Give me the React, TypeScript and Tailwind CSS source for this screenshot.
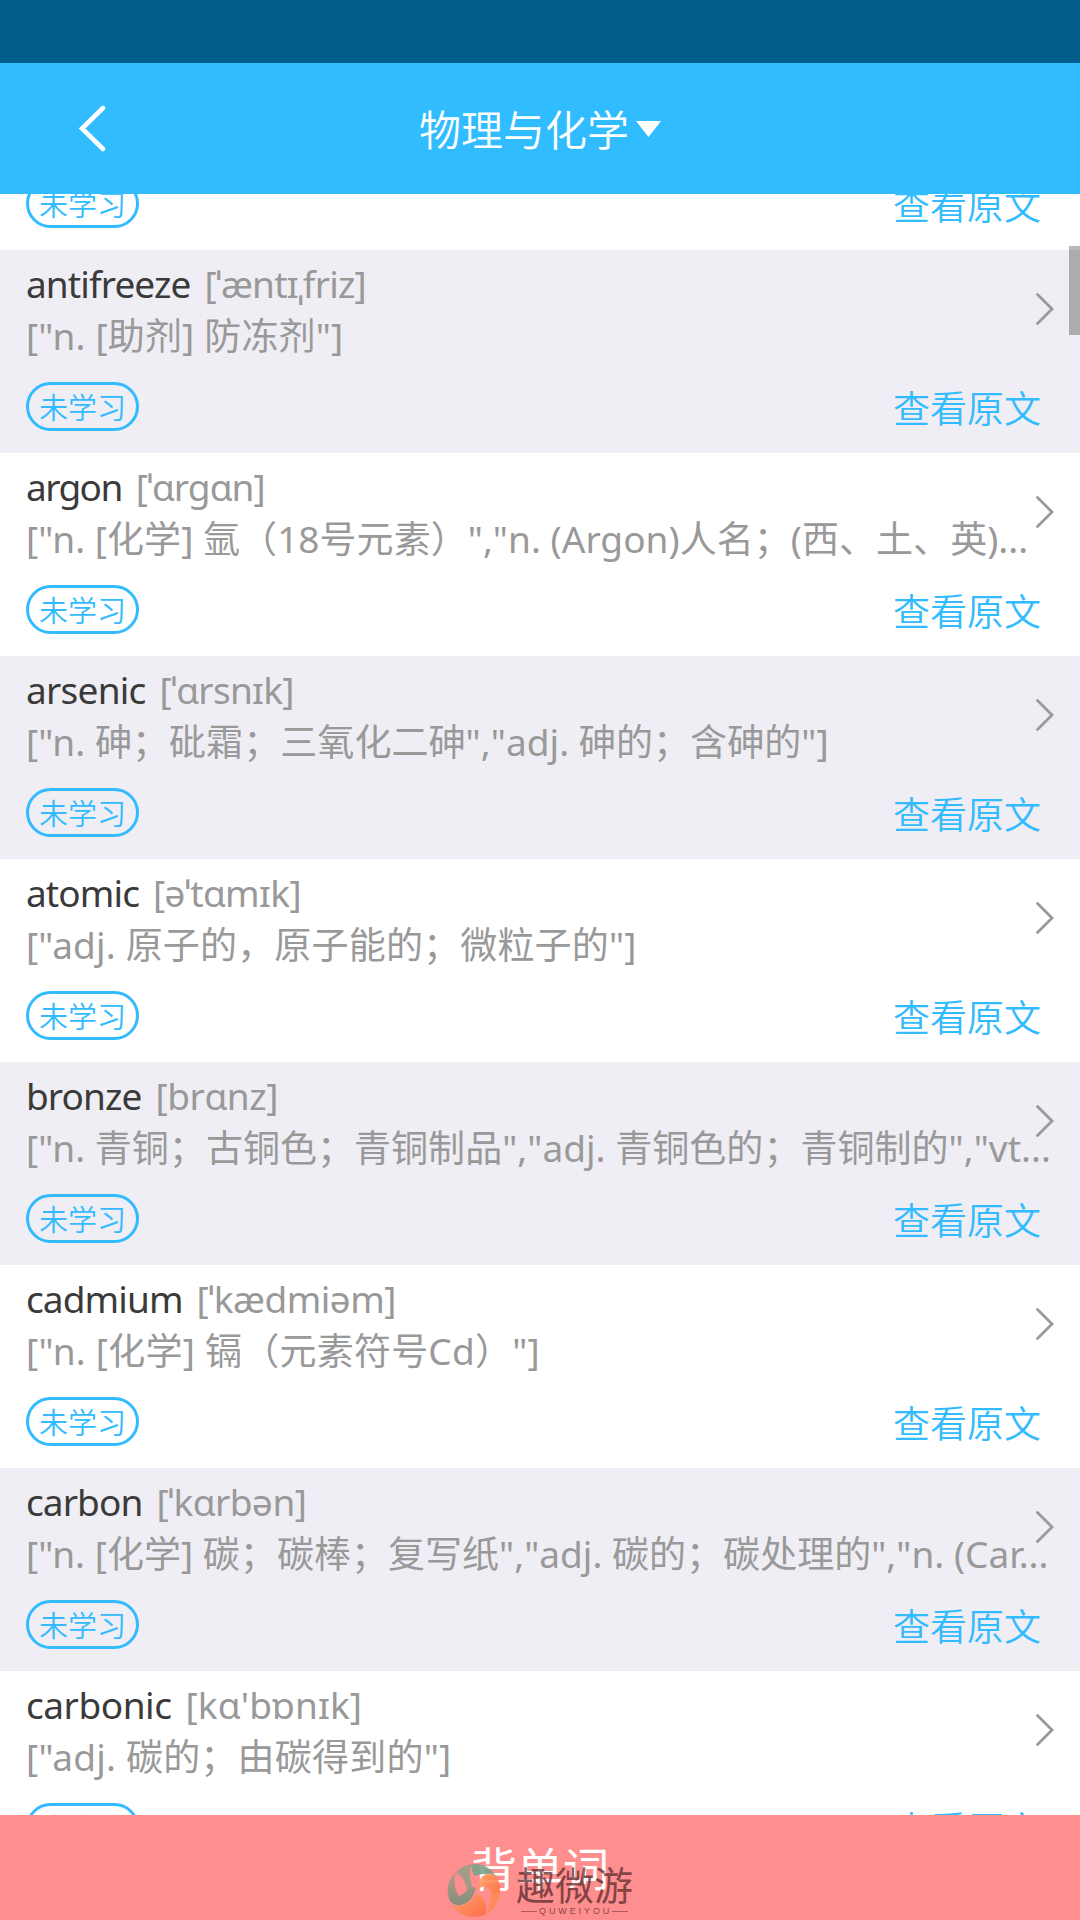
interface Word {
  word: string;
  phonetic: string;
  meaning: string;
  wordClass?: string;
  phoneticClass?: string;
  meaningClass?: string;
}

const words: Word[] = [
  { word: 'antifreeze', phonetic: '[ˈæntɪˌfriz]', meaning: '["n. [助剂] 防冻剂"]', phoneticClass: 'tracking-[-0.8px]', meaningClass: 'tracking-[0.17px]' },
  { word: 'argon', phonetic: '[ˈɑrgɑn]', meaning: '["n. [化学] 氩（18号元素）","n. (Argon)人名；(西、土、英)...', wordClass: 'tracking-[-1.6px]', phoneticClass: 'tracking-[-0.9px]', meaningClass: 'tracking-[0.05px]' },
  { word: 'arsenic', phonetic: '[ˈɑrsnɪk]', meaning: '["n. 砷；砒霜；三氧化二砷","adj. 砷的；含砷的"]', wordClass: 'tracking-[-0.75px]', phoneticClass: 'tracking-[-0.7px]' },
  { word: 'atomic', phonetic: '[əˈtɑmɪk]', meaning: '["adj. 原子的，原子能的；微粒子的"]', meaningClass: 'tracking-[0.18px]' },
  { word: 'bronze', phonetic: '[brɑnz]', meaning: '["n. 青铜；古铜色；青铜制品","adj. 青铜色的；青铜制的","vt...', phoneticClass: 'tracking-[-0.4px]', meaningClass: 'tracking-[0.04px]' },
  { word: 'cadmium', phonetic: '[ˈkædmiəm]', meaning: '["n. [化学] 镉（元素符号Cd）"]', phoneticClass: 'tracking-[-0.5px]', meaningClass: 'tracking-[0.24px]' },
  { word: 'carbon', phonetic: '[ˈkɑrbən]', meaning: '["n. [化学] 碳；碳棒；复写纸","adj. 碳的；碳处理的","n. (Car...', phoneticClass: 'tracking-[-0.5px]', meaningClass: 'tracking-[0.03px]' },
  { word: 'carbonic', phonetic: "[kɑ'bɒnɪk]", meaning: '["adj. 碳的；由碳得到的"]', wordClass: 'tracking-[-0.45px]', phoneticClass: 'tracking-[0.15px]', meaningClass: 'tracking-[0.22px]' },
];

function RowActions() {
  return (
    <div className="flex h-[49px] shrink-0 items-center justify-between pr-[39px] pl-[26px] font-[350] text-[#33bbff]">
      <span className="flex h-[49px] w-[113px] items-center justify-center rounded-full border-[3px] border-[#33bbff] pt-[2px] text-[29px] leading-none">
        未学习
      </span>
      <span className="pt-[3px] text-[37px] leading-none">查看原文</span>
    </div>
  );
}

function WordRow({ item, shaded }: { item: Word; shaded: boolean }) {
  return (
    <li className={`relative flex h-[203px] shrink-0 flex-col ${shaded ? 'bg-[#efeef4]' : 'bg-white'}`}>
      <div className="mt-[8px] flex h-[52px] items-center gap-[14px] pl-[26px] text-[37px] leading-[52px] whitespace-nowrap">
        <span className={`text-[#3a3a3a] ${item.wordClass ?? 'tracking-[-0.9px]'}`}>{item.word}</span>
        <span className={`text-[#999] ${item.phoneticClass ?? 'tracking-[-0.6px]'}`}>{item.phonetic}</span>
      </div>
      <p className={`mb-[20px] h-[52px] pl-[26px] text-[37px] leading-[52px] whitespace-nowrap text-[#999] ${item.meaningClass ?? 'tracking-[0.07px]'}`}>
        {item.meaning}
      </p>
      <RowActions />
      <svg className="absolute top-[42px] right-[24px] h-[34px] w-[22px]" viewBox="0 0 22 34" fill="none">
        <path d="M3.5 2.5 L18 17 L3.5 31.5" stroke="#999" strokeWidth="2.8" strokeLinecap="round" />
      </svg>
    </li>
  );
}

function Watermark() {
  return (
    <div className="absolute top-[48px] left-[447px] flex items-start">
      <svg className="h-[54px] w-[54px] opacity-90" viewBox="0 0 54 54">
        <defs>
          <linearGradient id="leaf" x1="0" y1="0" x2="0" y2="1">
            <stop offset="0" stopColor="#b09a86" />
            <stop offset="1" stopColor="#74907a" />
          </linearGradient>
          <linearGradient id="flame" x1="0" y1="0" x2="1" y2="1">
            <stop offset="0" stopColor="#ffa562" />
            <stop offset="1" stopColor="#ff6a45" />
          </linearGradient>
        </defs>
        <path d="M9 9 A27 27 0 0 0 1 32 Q2 41 11 42.5 Q25 41 29 25 L23 23 Q17 32 12 33 Q5 24 9 9 Z" fill="url(#leaf)" />
        <path d="M9 9 Q16 2 26 1 Q20 8 25 22 L20 27 Q18 14 9 9 Z" fill="#9a9e87" />
        <path d="M26 1 Q37 0 45 8 L49 13 Q37 9 28 13 Q23 8 26 1 Z" fill="#7ba58a" />
        <path d="M30 27 Q31 15 39 11 Q46 10 49 13 Q54 21 53 29 Q50 36 45 41 Q47 26 38 23 Q33 24 30 27 Z" fill="url(#flame)" />
        <path d="M5 43 Q21 45 30 31 Q41 36 39 51 A27 27 0 0 1 5 43 Z" fill="url(#flame)" />
        <path d="M43 32 L53 29 Q52 43 40 51 Q44 41 43 32 Z" fill="#ff8a55" />
      </svg>
      <div className="mt-[3px] ml-[14px] flex w-[119px] flex-col items-center text-[#5b2a2c]/75">
        <span className="text-[39px] leading-[38px] whitespace-nowrap">趣微游</span>
        <div className="mt-[2px] flex w-[107px] items-center">
          <i className="h-px w-[16px] shrink-0 bg-[#5b2a2c]/50" />
          <span className="flex-1 pl-[2px] text-center font-['Liberation_Sans',sans-serif] text-[9px] leading-[10px] tracking-[2.9px]">QUWEIYOU</span>
          <i className="h-px w-[16px] shrink-0 bg-[#5b2a2c]/50" />
        </div>
      </div>
    </div>
  );
}

export default function App() {
  return (
    <div className="flex h-[1920px] w-[1080px] flex-col overflow-hidden bg-white font-['Noto_Sans','Noto_Sans_CJK_SC',sans-serif]">
      <div className="h-[63px] shrink-0 bg-[#005c8a]" />
      <header className="relative flex h-[131px] shrink-0 items-center justify-center bg-[#30bcff] text-white">
        <svg className="absolute top-[40px] left-[75px] h-[50px] w-[34px]" viewBox="0 0 34 50" fill="none">
          <path d="M28 5 L7 25.5 L28 46" stroke="#fff" strokeWidth="4.6" strokeLinecap="round" />
        </svg>
        <span className="pt-[3px] text-[42px] leading-none font-[350]">物理与化学</span>
        <svg className="ml-[7px] h-[16px] w-[25px]" viewBox="0 0 25 16">
          <path d="M0 0 H25 L12.5 16 Z" fill="#fff" />
        </svg>
      </header>
      <main className="relative h-[1621px] shrink-0 overflow-hidden">
        {/* tail of the row scrolled under the header */}
        <div className="-mt-[15px] flex h-[71px] flex-col">
          <RowActions />
        </div>
        <ul className="flex flex-col">
          {words.map((item, i) => (
            <WordRow key={item.word} item={item} shaded={i % 2 === 0} />
          ))}
        </ul>
        <div className="absolute top-[52px] right-0 h-[89px] w-[11px] bg-black/28" />
      </main>
      <footer className="relative flex h-[105px] shrink-0 items-center justify-center bg-[#ff8f8f] text-white">
        <span className="text-[46px] leading-none">背单词</span>
        <Watermark />
      </footer>
    </div>
  );
}
